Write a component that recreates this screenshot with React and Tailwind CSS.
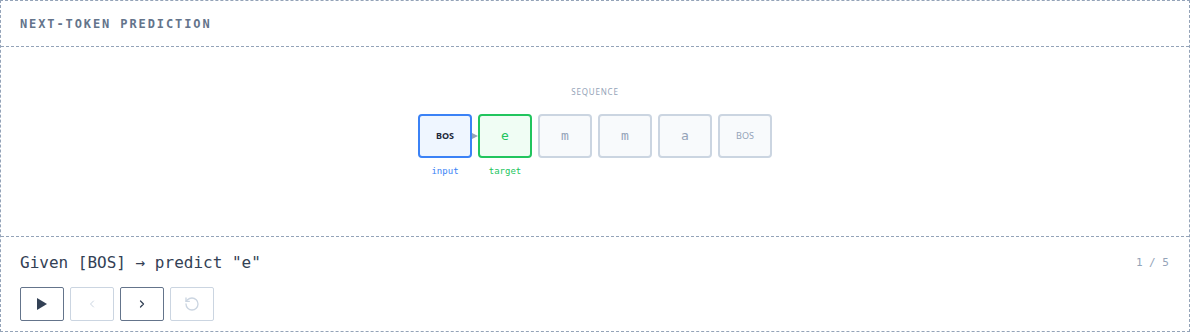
import React from "react";

const mono = { fontFamily: '"DejaVu Sans Mono", "Liberation Mono", monospace' };
const sans = { fontFamily: '"Noto Sans", "Open Sans", sans-serif' };

function Box({ children, variant, bold, isMono }) {
  const cls =
    variant === "input"
      ? "border-[#3b82f6] bg-[#eff6ff] text-[#1e293b]"
      : variant === "target"
      ? "border-[#22c55e] bg-[#f0fdf4] text-[#22c55e]"
      : "border-[#cbd5e1] bg-[#f8fafc] text-[#94a3b8]";
  return (
    <div
      className={`w-[54px] h-[44px] border-2 rounded-[4px] flex items-center justify-center ${cls} ${
        isMono ? "text-[13px]" : "text-[9px]"
      } ${bold ? "font-bold" : ""}`}
      style={isMono ? mono : sans}
    >
      {children}
    </div>
  );
}

export default function App() {
  return (
    <div className="w-[1190px] h-[332px] bg-white border border-dashed border-[#94a3b8] flex flex-col">
      <div className="h-[46px] shrink-0 flex items-center px-[19px] border-b border-dashed border-[#94a3b8]">
        <span
          className="text-[12px] font-bold tracking-[1.9px] text-[#64748b]"
          style={mono}
        >
          NEXT-TOKEN PREDICTION
        </span>
      </div>
      <div className="h-[190px] shrink-0 flex flex-col items-center border-b border-dashed border-[#94a3b8]">
        <div
          className="mt-[39px] text-[8px] tracking-[0.8px] text-[#94a3b8] leading-[12px]"
          style={sans}
        >
          SEQUENCE
        </div>
        <div className="mt-[16px] flex gap-[6px] relative">
          <Box variant="input" bold>
            BOS
          </Box>
          <Box variant="target" isMono>
            e
          </Box>
          <Box isMono>m</Box>
          <Box isMono>m</Box>
          <Box isMono>a</Box>
          <Box>BOS</Box>
          <svg
            className="absolute left-[54px] top-[19px]"
            width="6"
            height="6"
            viewBox="0 0 6 6"
          >
            <polygon points="0,0 6,3 0,6" fill="#94a3b8" />
          </svg>
        </div>
        <div className="mt-[6px] flex gap-[6px] text-[9px] leading-[14px]" style={mono}>
          <div className="w-[54px] text-center text-[#3b82f6]">input</div>
          <div className="w-[54px] text-center text-[#22c55e]">target</div>
          <div className="w-[54px]" />
          <div className="w-[54px]" />
          <div className="w-[54px]" />
          <div className="w-[54px]" />
        </div>
      </div>
      <div className="flex-1 flex flex-col px-[19px] pt-[14px]">
        <div className="flex items-center justify-between h-[24px]">
          <span className="text-[16px] text-[#334155]" style={mono}>
            Given [BOS] → predict "e"
          </span>
          <span className="text-[11px] text-[#94a3b8] mr-[1px]" style={mono}>
            1 / 5
          </span>
        </div>
        <div className="mt-[12px] flex gap-[6px]">
          <button className="w-[44px] h-[34px] border border-[#64748b] rounded-[2px] flex items-center justify-center">
            <svg width="12" height="14" viewBox="0 0 12 14">
              <polygon points="1,1 11,7 1,13" fill="#334155" />
            </svg>
          </button>
          <button className="w-[44px] h-[34px] border border-[#cbd5e1] rounded-[2px] flex items-center justify-center">
            <svg width="12" height="12" viewBox="0 0 24 24" fill="none" stroke="#cbd5e1" strokeWidth="2" strokeLinecap="round" strokeLinejoin="round">
              <path d="M15 18l-6-6 6-6" />
            </svg>
          </button>
          <button className="w-[44px] h-[34px] border border-[#64748b] rounded-[2px] flex items-center justify-center">
            <svg width="12" height="12" viewBox="0 0 24 24" fill="none" stroke="#334155" strokeWidth="2.5" strokeLinecap="round" strokeLinejoin="round">
              <path d="M9 18l6-6-6-6" />
            </svg>
          </button>
          <button className="w-[44px] h-[34px] border border-[#cbd5e1] rounded-[2px] flex items-center justify-center">
            <svg width="16" height="16" viewBox="0 0 24 24" fill="none" stroke="#cbd5e1" strokeWidth="2" strokeLinecap="round" strokeLinejoin="round">
              <path d="M3 12a9 9 0 1 0 9-9 9.75 9.75 0 0 0-6.74 2.74L3 8" />
              <path d="M3 3v5h5" />
            </svg>
          </button>
        </div>
      </div>
    </div>
  );
}
